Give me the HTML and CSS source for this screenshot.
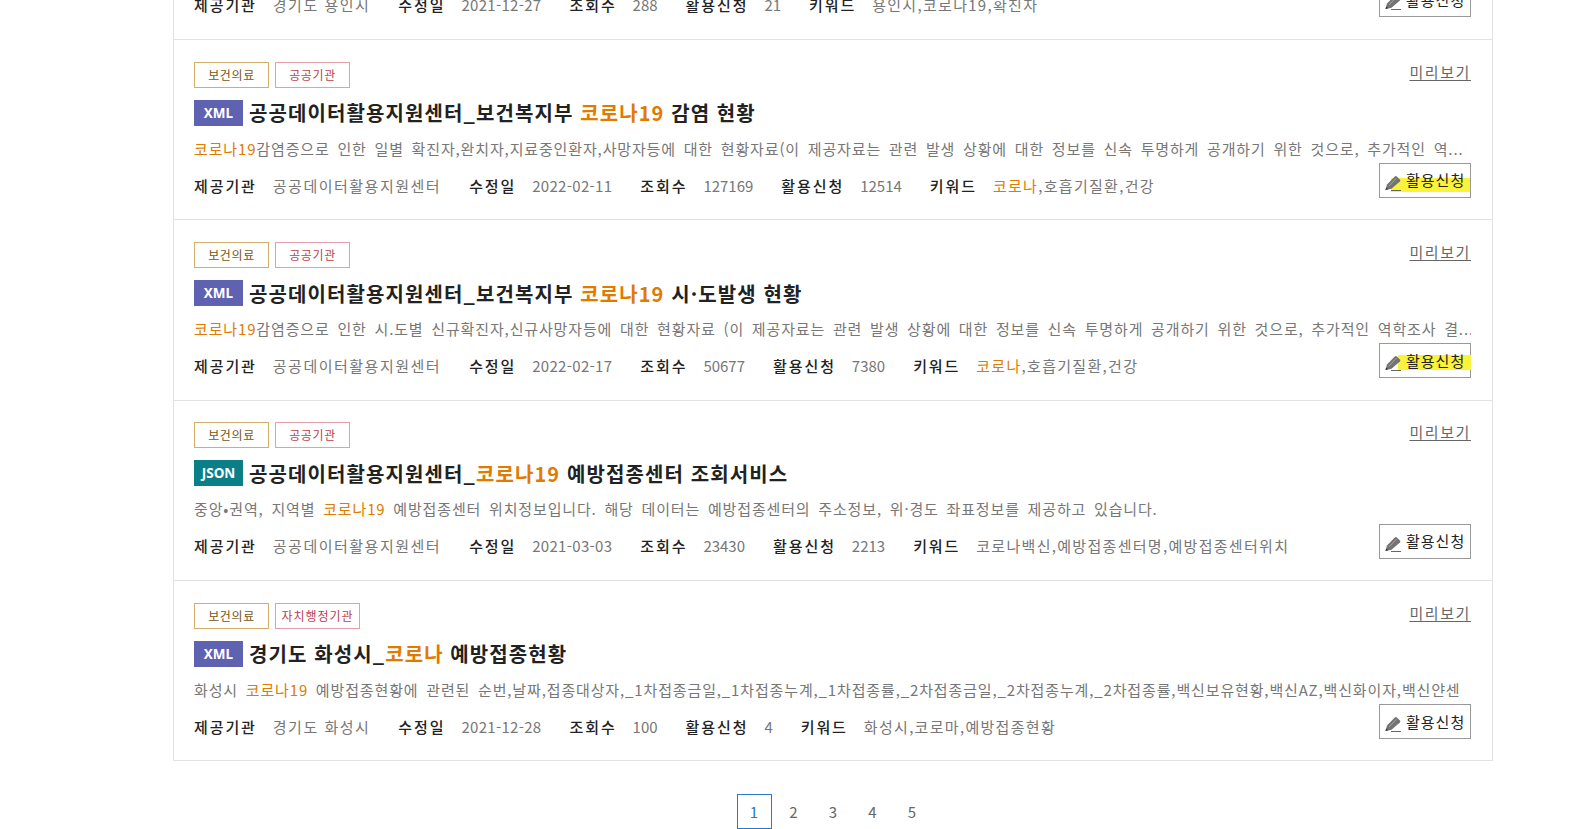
FILE: index.html
```html
<!DOCTYPE html>
<html lang="ko">
<head>
<meta charset="utf-8">
<title>공공데이터 목록</title>
<link rel="stylesheet" href="styles.css">
</head>
<body>
<svg class="defs" width="0" height="0"><symbol id="pen" viewBox="0 0 16 16"><path d="M.5 15 2 9.600 9.800 1.500a1.500 1.500 0 0 1 2.100 0l3 3a1.500 1.500 0 0 1 0 2.100L6.500 13.800Z" fill="#737373"/><path d="M4 11 11.400 3.200" stroke="#aaa" stroke-width=".9"/><path d="M.5 15 1.200 12.400 3.300 14.300Z" fill="#333"/><path d="M6 15.500H16" stroke="#666" stroke-width="1"/></symbol></svg>
<main class="page">
<ul class="list">
<li class="row">
  <div class="top"><div class="tags"><span class="tag tag-a">보건의료</span><span class="tag tag-b">공공기관</span></div><a class="preview">미리보기</a></div>
  <h3 class="title"><span class="fmt fmt-xml">XML</span>경기도 용인시_<em>코로나19</em> 현황</h3>
  <p class="desc">경기도 용인시 <em>코로나19</em> 현황 자료입니다.</p>
  <div class="bottom"><dl class="meta"><dt>제공기관</dt><dd>경기도 용인시</dd><dt>수정일</dt><dd class="num date">2021-12-27</dd><dt>조회수</dt><dd class="num">288</dd><dt>활용신청</dt><dd class="num">21</dd><dt>키워드</dt><dd class="kw">용인시,코로나19,확진자</dd></dl><a class="apply"><svg class="pen"><use href="#pen"/></svg><span class="apply-label">활용신청</span></a></div>
</li>
<li class="row">
  <div class="top"><div class="tags"><span class="tag tag-a">보건의료</span><span class="tag tag-b">공공기관</span></div><a class="preview">미리보기</a></div>
  <h3 class="title"><span class="fmt fmt-xml">XML</span>공공데이터활용지원센터_보건복지부 <em>코로나19</em> 감염 현황</h3>
  <p class="desc"><em>코로나19</em>감염증으로 인한 일별 확진자,완치자,지료중인환자,사망자등에 대한 현황자료(이 제공자료는 관련 발생 상황에 대한 정보를 신속 투명하게 공개하기 위한 것으로, 추가적인 역...</p>
  <div class="bottom"><dl class="meta"><dt>제공기관</dt><dd>공공데이터활용지원센터</dd><dt>수정일</dt><dd class="num date">2022-02-11</dd><dt>조회수</dt><dd class="num">127169</dd><dt>활용신청</dt><dd class="num">12514</dd><dt>키워드</dt><dd class="kw"><em>코로나</em>,호흡기질환,건강</dd></dl><a class="apply"><svg class="pen"><use href="#pen"/></svg><span class="apply-label mark mark-wide">활용신청</span></a></div>
</li>
<li class="row">
  <div class="top"><div class="tags"><span class="tag tag-a">보건의료</span><span class="tag tag-b">공공기관</span></div><a class="preview">미리보기</a></div>
  <h3 class="title"><span class="fmt fmt-xml">XML</span>공공데이터활용지원센터_보건복지부 <em>코로나19</em> 시·도발생 현황</h3>
  <p class="desc"><em>코로나19</em>감염증으로 인한 시.도별 신규확진자,신규사망자등에 대한 현황자료 (이 제공자료는 관련 발생 상황에 대한 정보를 신속 투명하게 공개하기 위한 것으로, 추가적인 역학조사 결...</p>
  <div class="bottom"><dl class="meta"><dt>제공기관</dt><dd>공공데이터활용지원센터</dd><dt>수정일</dt><dd class="num date">2022-02-17</dd><dt>조회수</dt><dd class="num">50677</dd><dt>활용신청</dt><dd class="num">7380</dd><dt>키워드</dt><dd class="kw"><em>코로나</em>,호흡기질환,건강</dd></dl><a class="apply"><svg class="pen"><use href="#pen"/></svg><span class="apply-label mark">활용신청</span></a></div>
</li>
<li class="row">
  <div class="top"><div class="tags"><span class="tag tag-a">보건의료</span><span class="tag tag-b">공공기관</span></div><a class="preview">미리보기</a></div>
  <h3 class="title"><span class="fmt fmt-json">JSON</span>공공데이터활용지원센터_<em>코로나19</em> 예방접종센터 조회서비스</h3>
  <p class="desc">중앙•권역, 지역별 <em>코로나19</em> 예방접종센터 위치정보입니다. 해당 데이터는 예방접종센터의 주소정보, 위·경도 좌표정보를 제공하고 있습니다.</p>
  <div class="bottom"><dl class="meta"><dt>제공기관</dt><dd>공공데이터활용지원센터</dd><dt>수정일</dt><dd class="num date">2021-03-03</dd><dt>조회수</dt><dd class="num">23430</dd><dt>활용신청</dt><dd class="num">2213</dd><dt>키워드</dt><dd class="kw">코로나백신,예방접종센터명,예방접종센터위치</dd></dl><a class="apply"><svg class="pen"><use href="#pen"/></svg><span class="apply-label">활용신청</span></a></div>
</li>
<li class="row">
  <div class="top"><div class="tags"><span class="tag tag-a">보건의료</span><span class="tag tag-b tag-long">자치행정기관</span></div><a class="preview">미리보기</a></div>
  <h3 class="title"><span class="fmt fmt-xml">XML</span>경기도 화성시_<em>코로나</em> 예방접종현황</h3>
  <p class="desc">화성시 <em>코로나19</em> 예방접종현황에 관련된 순번,날짜,접종대상자,_1차접종금일,_1차접종누계,_1차접종률,_2차접종금일,_2차접종누계,_2차접종률,백신보유현황,백신AZ,백신화이자,백신얀센</p>
  <div class="bottom"><dl class="meta"><dt>제공기관</dt><dd>경기도 화성시</dd><dt>수정일</dt><dd class="num date">2021-12-28</dd><dt>조회수</dt><dd class="num">100</dd><dt>활용신청</dt><dd class="num">4</dd><dt>키워드</dt><dd class="kw">화성시,코로마,예방접종현황</dd></dl><a class="apply"><svg class="pen"><use href="#pen"/></svg><span class="apply-label">활용신청</span></a></div>
</li>
</ul>
<nav class="pager"><a class="on">1</a><a>2</a><a>3</a><a>4</a><a>5</a></nav>
</main>
</body>
</html>
```
FILE: styles.css
```css
* { box-sizing: border-box; }
html, body { margin: 0; height: 829px; overflow: hidden; background: #fff; }
body { font-family: "Noto Sans CJK KR", "Noto Sans", sans-serif; color: #666; }
.defs { display: block; }
.page { margin: -141.5px 93px 0 173px; }
.list { list-style: none; margin: 0; padding: 0; border: 1px solid #e2e2e2; }
.row { height: 180.4px; padding: 21.7px 21px 0 20px; border-bottom: 1px solid #e2e2e2; }
.row:last-child { border-bottom: 0; height: 178.5px; }
.top { display: flex; justify-content: space-between; align-items: flex-start; height: 26px; }
.tags { display: flex; gap: 6px; }
.tag { height: 26px; width: 75px; display: flex; align-items: center; justify-content: center; font-size: 12px; letter-spacing: .6px; border: 1px solid; background: #fff; white-space: nowrap; padding-bottom: 1px; }
.tag-a { color: #7a5410; border-color: #d2ae6d; }
.tag-b { color: #b8404f; border-color: #e3a0ac; }
.tag-long { width: 85px; letter-spacing: 1px; }
.preview { color: #666; font-size: 15px; letter-spacing: 1.6px; line-height: 20px; text-decoration: underline; text-underline-offset: 2px; }
.title { display: flex; align-items: center; margin: 12.1px 0 0; height: 26px; font-size: 20px; font-weight: 700; letter-spacing: 1.1px; color: #222; white-space: pre-wrap; }
.title em, .desc em, .meta em { font-style: normal; color: #e07b00; }
.fmt { flex: none; width: 49px; height: 26px; margin-right: 6px; display: flex; align-items: center; justify-content: center; font: 700 13.5px "Noto Sans", sans-serif; letter-spacing: 0; color: #fff; }
.fmt-xml { background: #5f62b0; }
.fmt-json { background: #0a7f88; }
.desc { margin: 11.9px 0 0; height: 22px; font-size: 15px; line-height: 22px; letter-spacing: .86px; word-spacing: 2.7px; color: #777; white-space: nowrap; overflow: hidden; }
.bottom { display: flex; justify-content: space-between; align-items: flex-start; margin-top: 3.3px; height: 36px; }
.meta { display: flex; margin: 11.7px 0 0; font-size: 15px; line-height: 22px; white-space: nowrap; }
.meta dt { color: #222; font-weight: 500; letter-spacing: 1.9px; margin-right: 16px; }
.meta dd { margin: 0 28px 0 0; color: #777; letter-spacing: 1.5px; }
.meta .num { letter-spacing: 0; }
.meta .date { letter-spacing: .3px; }
.meta .kw { letter-spacing: 1.3px; }
.apply { flex: none; width: 92px; height: 35px; border: 1px solid #999; display: flex; align-items: center; padding-left: 5px; font-size: 15px; color: #222; }
.apply-label { position: relative; margin-left: 5px; letter-spacing: 1px; line-height: 22px; }
.pen { width: 16px; height: 16px; flex: none; position: relative; z-index: 1; margin-top: 5px; }
.mark { isolation: isolate; }
.mark::before { content: ""; position: absolute; z-index: -1; top: 5.5px; height: 15px; left: -8px; right: -6px; background: #fbf33a; }
.mark-wide::before { top: 8.5px; height: 14px; left: -15px; right: -5px; }
.pager { display: flex; justify-content: center; margin: 33px 0 0; gap: 4.5px; }
.pager a { width: 35px; height: 35px; display: flex; align-items: center; justify-content: center; font-size: 15px; color: #666; }
.pager .on { color: #2b78d0; border: 1px solid #2b78d0; }
```
